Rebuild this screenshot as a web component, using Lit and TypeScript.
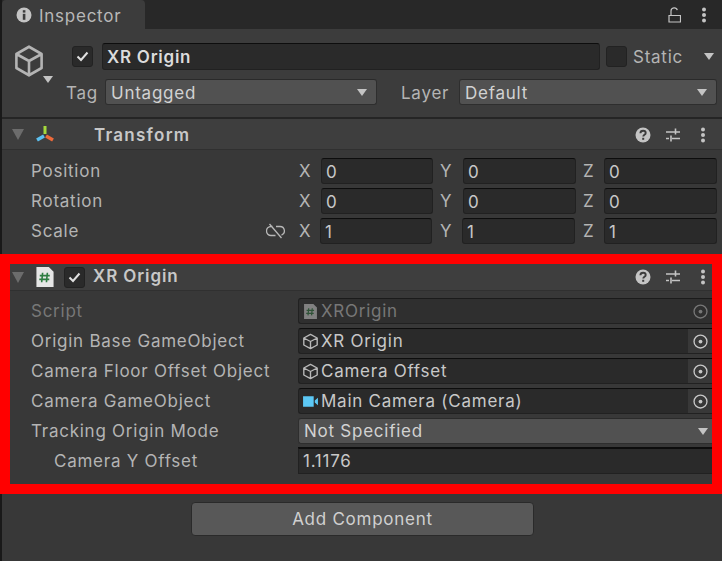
import { LitElement, html, css, svg } from "lit";
import { customElement } from "lit/decorators.js";

const kebab = html`<svg class="ico16" viewBox="0 0 16 16"><g fill="#c4c4c4"><circle cx="8" cy="2.500" r="2"/><circle cx="8" cy="8" r="2"/><circle cx="8" cy="13.500" r="2"/></g></svg>`;
const help = html`<svg class="ico16" viewBox="0 0 16 16"><circle cx="8" cy="8" r="7.500" fill="#c4c4c4"/><path d="M5.400 6.200c0-1.600 1.200-2.500 2.700-2.500s2.600.9 2.600 2.200c0 1.900-2.400 1.900-2.400 3.600" fill="none" stroke="#3c3c3c" stroke-width="1.900"/><rect x="7.200" y="10.800" width="2" height="2" fill="#3c3c3c"/></svg>`;
const sliders = html`<svg class="ico16" viewBox="0 0 16 16"><path d="M1 5h14M10.500 1.500v6M1 11.500h3M7 11.500h8M6 8.500v6" fill="none" stroke="#c4c4c4" stroke-width="1.600"/></svg>`;
const headTools = html`<div class="tools">${help}${sliders}${kebab}</div>`;
const cubeP = svg`<path d="M8 1.300 14.300 4.700V11.300L8 14.700 1.700 11.300V4.700ZM1.700 4.700 8 8 14.300 4.700M8 8V14.700" fill="none" stroke="currentColor" stroke-width="1.300" stroke-linejoin="round"/>`;
const cube = html`<svg class="mini" viewBox="0 0 16 16">${cubeP}</svg>`;
const target = html`<svg class="target" viewBox="0 0 16 16"><circle cx="8" cy="8" r="6.900" fill="none" stroke="currentColor" stroke-width="1.400"/><circle cx="8" cy="8" r="2" fill="currentColor"/></svg>`;
const cam = html`<svg class="mini" viewBox="0 0 16 16"><path d="M1 3h10v10H1zM12 7l3-2.500v7L12 9z" fill="#5cc8f5"/></svg>`;
const scriptIco = (cls: string) => html`<svg class=${cls} viewBox="0 0 18 21"><path d="M0 0H13L18 5V21H0Z" fill="#e6e6e6"/><path d="M6.500 6 5.500 16M11.500 6 10.500 16M3.500 9H14M3 13H13.500" fill="none" stroke="#2f7d42" stroke-width="1.700"/></svg>`;
const tri = html`<span class="tri"></span>`;

@customElement("app-root")
export class AppRoot extends LitElement {
  static styles = css`
    :host { display: block; width: 722px; height: 561px; overflow: hidden; background: #383838; color: #c0c0c0; font: 17px/26px Inter, "Liberation Sans", sans-serif; letter-spacing: 0.75px; }
    * { box-sizing: border-box; }
    svg { display: block; flex: none; }
    .edge { border-left: 2px solid #191919; }
    .tabbar { height: 29px; background: #282828; display: flex; justify-content: space-between; }
    .tab { width: 143px; background: #3c3c3c; border-radius: 4px 4px 0 0; display: flex; align-items: center; gap: 7px; padding: 2px 0 0 14px; color: #b8b8b8; }
    .tab svg { margin-top: -2px; }
    .tabtools { display: flex; align-items: center; gap: 15px; padding-right: 10px; }
    .head { height: 90px; background: #3c3c3c; border-bottom: 2px solid #252525; display: grid; grid-template-columns: 59px 1fr; padding: 14px 6px 0 11px; }
    .bigcube { position: relative; width: 32px; height: 40px; color: #b4b4b4; }
    .bigcube .tri { position: absolute; left: 30px; top: 33px; }
    .headrows { display: flex; flex-direction: column; gap: 9px; }
    .r1, .r2 { display: flex; align-items: center; }
    .r1 { height: 27px; }
    .r2 { height: 26px; }
    .check { width: 21px; height: 21px; flex: none; background: #2a2a2a; border: 1px solid #222; border-radius: 3px; display: grid; place-items: center; }
    .name { width: 498px; height: 27px; margin-left: 9px; background: #2a2a2a; border: 1px solid #212121; border-top-color: #0d0d0d; border-radius: 3px; color: #dcdcdc; font-weight: 600; line-height: 27px; padding-left: 4px; }
    .static { margin-left: 6px; }
    .statlabel { margin-left: 6px; width: 71px; color: #b4b4b4; }
    .lbl { color: #b4b4b4; }
    .taglbl { margin-left: -6px; width: 39px; flex: none; padding-top: 2px; }
    .drop { height: 26px; background: #515151; border: 1px solid #2e2e2e; border-top-color: #2a2a2a; border-radius: 3px; display: flex; align-items: center; justify-content: space-between; padding: 0 9px 0 5px; color: #d2d2d2; line-height: 24px; }
    .tagdrop span:first-child, .laydrop span:first-child { padding-top: 2px; }
    .tagdrop { width: 272px; }
    .laylbl { width: 50px; margin: 0 8px 0 24px; padding-top: 2px; }
    .laydrop { width: 258px; }
    .tri { display: block; flex: none; width: 0; height: 0; border-left: 5.500px solid transparent; border-right: 5.500px solid transparent; border-top: 7px solid #c4c4c4; }
    .comphead { display: flex; align-items: center; background: #3e3e3e; border-bottom: 1px solid #303030; }
    .fold { flex: none; width: 0; height: 0; border-left: 6px solid transparent; border-right: 6px solid transparent; border-top: 11px solid #6c6c6c; }
    .title { color: #c8c8c8; font-weight: 600; }
    .tools { margin-left: auto; display: flex; align-items: center; gap: 14px; }
    .ico16 { width: 16px; height: 16px; }
    .thead { height: 31px; padding: 0 11px 0 10px; }
    .thead .tools { padding-top: 1px; }
    .thead .ticon { margin-left: 11px; }
    .thead .title { margin-left: 39px; padding-top: 1px; letter-spacing: 1.25px; }
    .tbody { height: 104px; padding: 7px 5px 0 29px; display: flex; flex-direction: column; gap: 4px; }
    .vrow { display: grid; grid-template-columns: 268px 22px 112px 30px 113px 28px 113px; height: 26px; align-items: center; }
    .axis { color: #b4b4b4; letter-spacing: 0; padding-top: 1px; }
    .axis.y, .axis.z { padding-left: 7px; }
    .namecell { display: flex; justify-content: space-between; align-items: center; padding-right: 14px; padding-top: 1px; }
    .field { height: 26px; background: #2a2a2a; border: 1px solid #212121; border-top-color: #0d0d0d; border-radius: 3px; line-height: 26px; padding-left: 4px; color: #c8c8c8; min-width: 0; }
    .shift .field { margin: 0 1px 0 -1px; }
    .shift .field.last { margin: 0; }
    .section { border: 10px solid #f00; height: 240px; background: #383838; }
    .shead { height: 27px; padding: 0 0 0 2px; }
    .shead .script { width: 18px; height: 20px; margin-left: 12px; }
    .shead .check { margin-left: 10px; }
    .shead .title { margin-left: 8px; letter-spacing: 0.9px; padding-bottom: 2px; }
    .shead .tools { padding-right: 1px; }
    .sbody { padding: 7px 0 0 21px; display: flex; flex-direction: column; gap: 4px; }
    .row { display: grid; grid-template-columns: 267px 1fr; align-items: center; height: 26px; }
    .row .field { line-height: 24px; }
    .indent { padding-left: 23px; }
    .dim { color: #777; }
    .obj { display: flex; align-items: center; padding: 0; overflow: hidden; border-right: 0; border-radius: 3px 0 0 3px; }
    .obj .mini, .obj .sm { margin-left: 2px; margin-right: 1px; width: 19px; height: 19px; padding: 1px; color: #b8b8b8; }
    .obj .sm { padding: 2px 3px; opacity: 0.45; }
    .obj .txt { flex: 1; white-space: nowrap; }
    .pick { width: 24px; height: 24px; background: #383838; display: grid; place-items: center; color: #c8c8c8; }
    .target { width: 15px; height: 15px; }
    .dimfield { background: #2f2f2f; border-top-color: #1b1b1b; color: #777; }
    .dimfield .pick { background: #2f2f2f; color: #777; }
    .sdrop { height: 26px; padding-right: 4px; border-right: 0; border-radius: 3px 0 0 3px; }
    .sfloat { border-right: 0; border-radius: 0; box-shadow: 0 -1px 0 #0d0d0d; }
    .footer { height: 67px; display: flex; justify-content: center; padding: 8px 0 0 1px; }
    .btn { width: 343px; height: 34px; background: #585858; border: 1px solid #2a2a2a; border-radius: 4px; text-align: center; color: #d0d0d0; line-height: 33px; }
  `;

  private vec(name: string, v: [string, string, string], link = false) {
    return html`<div class="vrow ${link ? "shift" : ""}">
      <div class="namecell"><span class="lbl">${name}</span>${link ? html`<svg width="19" height="16" viewBox="0 0 19 16"><path d="M6.500 3.500H5a4.500 4.500 0 0 0 0 9h4.500M10 3.500h4a4.500 4.500 0 0 1 1.500 8.700M3.500 1l12 14" fill="none" stroke="#b8b8b8" stroke-width="1.300"/></svg>` : ""}</div>
      <span class="axis">X</span><div class="field">${v[0]}</div>
      <span class="axis y">Y</span><div class="field">${v[1]}</div>
      <span class="axis z">Z</span><div class="field last">${v[2]}</div>
    </div>`;
  }

  render() {
    const check = html`<svg width="13" height="11" viewBox="0 0 13 11"><path d="M1.500 5.500 5 9 11.500 1.500" fill="none" stroke="#e0e0e0" stroke-width="2"/></svg>`;
    return html`
      <div class="edge">
        <div class="tabbar">
          <div class="tab">
            <svg class="ico16" viewBox="0 0 16 16"><circle cx="8" cy="8" r="7.500" fill="#c4c4c4"/><rect x="6.800" y="6.800" width="2.600" height="6" fill="#3c3c3c"/><rect x="6.800" y="3.200" width="2.600" height="2.400" fill="#3c3c3c"/></svg>
            <span>Inspector</span>
          </div>
          <div class="tabtools">
            <svg width="13" height="16" viewBox="0 0 13 16"><path d="M1 8.500h11.500v6.500H1zM3 8V4a3.200 3.200 0 0 1 6.300-.8" fill="none" stroke="#c4c4c4" stroke-width="1.200"/></svg>
            ${kebab}
          </div>
        </div>
        <div class="head">
          <div class="bigcube"><svg width="32" height="34" viewBox="0 0 16 16" preserveAspectRatio="none" style="margin-top:1px">${cubeP}</svg>${tri}</div>
          <div class="headrows">
            <div class="r1">
              <div class="check">${check}</div>
              <div class="name">XR Origin</div>
              <div class="check static"></div>
              <span class="statlabel">Static</span>
              ${tri}
            </div>
            <div class="r2">
              <span class="lbl taglbl">Tag</span>
              <div class="drop tagdrop"><span>Untagged</span>${tri}</div>
              <span class="lbl laylbl">Layer</span>
              <div class="drop laydrop"><span>Default</span>${tri}</div>
            </div>
          </div>
        </div>
        <div class="comphead thead">
          <span class="fold"></span>
          <svg class="ticon" width="20" height="18" viewBox="0 0 20 18"><path d="M10 1v8" stroke="#a5d83c" stroke-width="3"/><path d="M9 11 2 15" stroke="#5cc0f0" stroke-width="3.500"/><path d="M11 11l7 4" stroke="#ee6a3a" stroke-width="3.500"/></svg>
          <span class="title">Transform</span>
          ${headTools}
        </div>
        <div class="tbody">
          ${this.vec("Position", ["0", "0", "0"])}
          ${this.vec("Rotation", ["0", "0", "0"])}
          ${this.vec("Scale", ["1", "1", "1"], true)}
        </div>
      </div>
      <div class="section">
        <div class="comphead shead">
          <span class="fold"></span>
          ${scriptIco("script")}
          <div class="check">${check}</div>
          <span class="title">XR Origin</span>
          ${headTools}
        </div>
        <div class="sbody">
          <div class="row"><span class="dim">Script</span>
            <div class="field obj dimfield">${scriptIco("sm")}<span class="txt">XROrigin</span><span class="pick">${target}</span></div></div>
          <div class="row"><span class="lbl">Origin Base GameObject</span>
            <div class="field obj">${cube}<span class="txt">XR Origin</span><span class="pick">${target}</span></div></div>
          <div class="row"><span class="lbl">Camera Floor Offset Object</span>
            <div class="field obj">${cube}<span class="txt">Camera Offset</span><span class="pick">${target}</span></div></div>
          <div class="row"><span class="lbl">Camera GameObject</span>
            <div class="field obj">${cam}<span class="txt">Main Camera (Camera)</span><span class="pick">${target}</span></div></div>
          <div class="row"><span class="lbl">Tracking Origin Mode</span>
            <div class="drop sdrop"><span>Not Specified</span>${tri}</div></div>
          <div class="row"><span class="lbl indent">Camera Y Offset</span>
            <div class="field sfloat">1.1176</div></div>
        </div>
      </div>
      <div class="edge footer"><div class="btn">Add Component</div></div>
    `;
  }
}
